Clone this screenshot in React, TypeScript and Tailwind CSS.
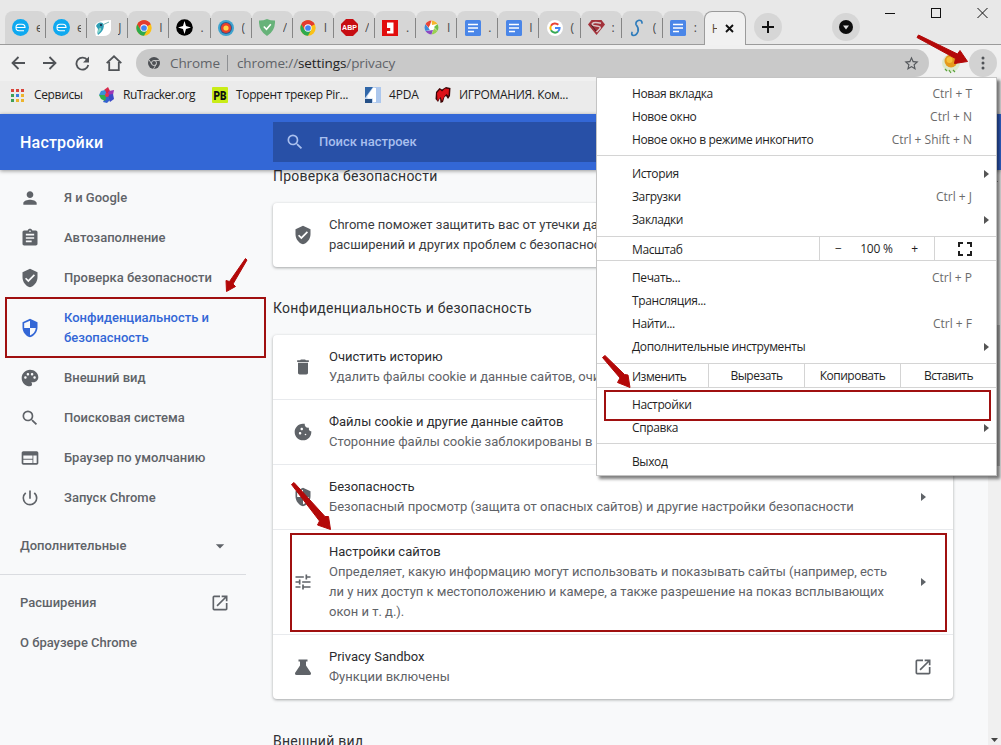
import type { ReactNode } from 'react';
import {
  MdAssignment,
  MdCookie,
  MdDelete,
  MdOpenInNew,
  MdPalette,
  MdPerson,
  MdPowerSettingsNew,
  MdSearch,
  MdSecurity,
  MdStarBorder,
  MdTune,
  MdVerifiedUser,
  MdWeb,
  MdArrowDropDown,
} from 'react-icons/md';

function ChromeLogo({ size = 16 }: { size?: number }) {
  return (
    <svg width={size} height={size} viewBox="0 0 48 48">
      <circle cx="24" cy="24" r="23" fill="#fbc116" />
      <path d="M24 24 L4.1 12.5 A23 23 0 0 1 43.9 12.5 Z" fill="#e33b2e" />
      <path d="M4.1 12.5 A23 23 0 0 0 24 47 L34 29.5 L24 24 L14 29.5 Z" fill="#2da94f" />
      <path d="M24 13 H44 A23 23 0 0 0 4.1 12.5 L14 29.5 Z" fill="#e33b2e" />
      <circle cx="24" cy="24" r="11" fill="#fff" />
      <circle cx="24" cy="24" r="8.6" fill="#4384f3" />
    </svg>
  );
}

function DocsIcon() {
  return (
    <svg width="16" height="16" viewBox="0 0 16 16">
      <rect width="16" height="16" rx="1.5" fill="#4a86e8" />
      <path d="M3 4.5h10M3 8h10M3 11.5h6" stroke="#fff" strokeWidth="1.7" />
    </svg>
  );
}

function EIcon() {
  return (
    <svg width="17" height="17" viewBox="0 0 17 17">
      <circle cx="8.5" cy="8.5" r="8.5" fill="#0fa9f0" />
      <path d="M4 8.5h9c0-2-1.5-3.2-3-3.2H7c-1.8 0-3 1.4-3 3.2s1.2 3.2 3 3.2h5" fill="none" stroke="#fff" strokeWidth="1.1" />
    </svg>
  );
}

function BirdIcon() {
  return (
    <svg width="16" height="16" viewBox="0 0 16 16">
      <path d="M0 5Q3 0 16 0v10q-1 6-8 6H1Q-1 10 0 5z" fill="#fff" />
      <path d="M1 6Q2.500 2.500 5.500 2.500q3.500 0 3.300 4Q8.500 11 3 15q-1-2 0-6z" fill="#2f9fb5" />
      <path d="M8.5 4.500 14 2" stroke="#4c9c9c" strokeWidth=".8" />
      <path d="M5 7.500q2.500 1 0 4l-2 2q-1-3 2-6z" fill="#86d5c8" />
      <circle cx="6" cy="5" r=".9" fill="#113" />
    </svg>
  );
}

function SparkIcon() {
  return (
    <svg width="17" height="17" viewBox="0 0 17 17">
      <circle cx="8.5" cy="8.5" r="8.3" fill="#000" />
      <path d="M8.5 2 10 7l5 1.5L10 10l-1.5 5L7 10 2 8.5 7 7z" fill="#fff" />
    </svg>
  );
}

function TargetIcon() {
  return (
    <svg width="16" height="16" viewBox="0 0 16 16">
      <circle cx="8" cy="8" r="8" fill="#3ea4cf" />
      <circle cx="8" cy="8" r="6" fill="#30548c" />
      <circle cx="8" cy="8" r="5" fill="#e8402a" />
      <circle cx="8" cy="8" r="2.6" fill="#ffd34a" />
    </svg>
  );
}

function GreenShield() {
  return (
    <svg width="16" height="17" viewBox="0 0 16 17">
      <path d="M8 0q4 1.7 8 1.5Q16.5 12 8 17-.5 12 0 1.5 4 1.7 8 0z" fill="#67b279" />
      <path d="m4.8 7.5 2.7 2.8 4.3-5" fill="none" stroke="#fff" strokeWidth="1.6" />
    </svg>
  );
}

function AbpIcon() {
  return (
    <svg width="17" height="17" viewBox="0 0 17 17">
      <path d="M5 0h7l5 5v7l-5 5H5l-5-5V5z" fill="#c70d12" />
      <text x="8.5" y="11.2" textAnchor="middle" fontFamily="Liberation Sans" fontSize="7" fontWeight="700" fill="#fff">ABP</text>
    </svg>
  );
}

function RedOneIcon() {
  return (
    <svg width="16" height="16" viewBox="0 0 16 16">
      <rect width="16" height="16" fill="#e20d0d" />
      <path d="M5 2.500h6.500v11H5v-2.500h3.200V8H5z" fill="#fff" />
    </svg>
  );
}

function PinwheelIcon() {
  return (
    <svg width="15" height="15" viewBox="0 0 15 15">
      <circle cx="7.5" cy="7.5" r="7" fill="#fff" />
      <path d="M7.5.5a7 7 0 0 1 6 3.5L8 5z" fill="#f5b52b" />
      <path d="M13.5 4a7 7 0 0 1 0 7L10 7z" fill="#6fbf47" />
      <path d="M13.5 11a7 7 0 0 1-6 3.5L10 8z" fill="#9ad052" />
      <path d="M7.5 14.5a7 7 0 0 1-6-3.5L9 10z" fill="#8a4bc0" />
      <path d="M1.5 11a7 7 0 0 1 0-7L6 10z" fill="#3e8ad8" />
      <path d="M1.5 4a7 7 0 0 1 6-3.5L5 8z" fill="#e84536" />
      <circle cx="7.5" cy="7.5" r="2.5" fill="#fff" />
    </svg>
  );
}

function GoogleIcon() {
  return (
    <svg width="16" height="16" viewBox="0 0 16 16">
      <circle cx="8" cy="8" r="8" fill="#fff" />
      <g fill="none" strokeWidth="2">
        <path d="M4 5.7A4.6 4.6 0 0 1 11.3 4.8" stroke="#ea4335" />
        <path d="M4 10.3A4.6 4.6 0 0 1 4 5.7" stroke="#fbbc05" />
        <path d="M11 11.5A4.6 4.6 0 0 1 4 10.3" stroke="#34a853" />
        <path d="M8 8h4.6a4.6 4.6 0 0 1-1.6 3.5" stroke="#4285f4" />
      </g>
    </svg>
  );
}

function SuperIcon() {
  return (
    <svg width="17" height="15" viewBox="0 0 17 15">
      <path d="M3.5 0h10L17 4.5 8.5 15 0 4.5z" fill="#a3313a" />
      <path d="M13 3.3Q6 1.5 4.5 3.5t4 2.5 3 3L8.500 12" fill="none" stroke="#d9c7c8" strokeWidth="1.5" />
      <path d="M3 4.5 8 11" stroke="#492024" strokeWidth="1" />
    </svg>
  );
}

function ScriptSIcon() {
  return (
    <svg width="14" height="18" viewBox="0 0 14 18">
      <path d="M12 4Q12 1 9 1.300 5.500 2.200 6 5.500 9 9 8 12.500 6.500 16.500 3.500 16.500 1 16 2 13.500" fill="none" stroke="#2f7cbb" strokeWidth="1.700" strokeLinecap="round" />
    </svg>
  );
}

const tabs: { icon: ReactNode; title: string }[] = [
  { icon: <EIcon />, title: 'e' },
  { icon: <EIcon />, title: 'e' },
  { icon: <BirdIcon />, title: 'J' },
  { icon: <ChromeLogo />, title: 'I' },
  { icon: <SparkIcon />, title: '.' },
  { icon: <TargetIcon />, title: '(' },
  { icon: <GreenShield />, title: '/' },
  { icon: <ChromeLogo />, title: 'I' },
  { icon: <AbpIcon />, title: '/' },
  { icon: <RedOneIcon />, title: '.' },
  { icon: <PinwheelIcon />, title: 'I' },
  { icon: <DocsIcon />, title: '.' },
  { icon: <DocsIcon />, title: 'I' },
  { icon: <GoogleIcon />, title: '(' },
  { icon: <SuperIcon />, title: ':' },
  { icon: <ScriptSIcon />, title: '(' },
  { icon: <DocsIcon />, title: ':' },
];

function TabStrip() {
  return (
    <div className="relative flex h-[45px] items-end border-b border-[#9b9b9b] bg-[#e8e8e8] pl-[5px]">
      {tabs.map((tab, i) => (
        <div key={i} className="relative flex h-[33px] w-[41.12px] shrink-0 items-center rounded-t-lg bg-[#d6d6d6] pl-[7px]">
          <span className="flex w-[17px] shrink-0 justify-center">{tab.icon}</span>
          <span className="ml-[7px] w-1 overflow-hidden text-[12px] text-[#4a4a4a]">{tab.title}</span>
          {i < tabs.length - 1 && <span className="absolute top-[7px] right-0 h-5 w-px bg-[#858585]" />}
        </div>
      ))}
      {/* Active tab */}
      <div className="relative -mb-px flex h-[34px] w-[42px] shrink-0 items-center rounded-t-lg border border-b-0 border-[#9b9b9b] bg-[#f1f1f1] pl-[7px]">
        <span className="w-[5px] overflow-hidden text-[12px] text-[#5a4a3a]">Н</span>
        <svg className="ml-2" width="9" height="9" viewBox="0 0 9 9">
          <path d="M1 1l7 7M8 1L1 8" stroke="#111" strokeWidth="1.9" />
        </svg>
      </div>
      <div className="mb-[3px] ml-[8px] flex h-7 w-7 items-center justify-center rounded-full bg-[#d6d6d6]">
        <svg width="12" height="12" viewBox="0 0 12 12">
          <path d="M6 0v12M0 6h12" stroke="#111" strokeWidth="2" />
        </svg>
      </div>
      <div className="mb-[3px] ml-[50px] flex h-7 w-7 items-center justify-center rounded-full bg-[#d6d6d6]">
        <svg width="14" height="14" viewBox="0 0 14 14">
          <circle cx="7" cy="7" r="7" fill="#0d0d0d" />
          <path d="M4 5.5h6L7 9.5z" fill="#ddd" />
        </svg>
      </div>
      <div className="mb-[25px] ml-auto flex gap-[35px] pr-[13px]">
        <svg width="11" height="12" viewBox="0 0 11 12">
          <path d="M0 6.5h10" stroke="#111" />
        </svg>
        <svg width="11" height="12" viewBox="0 0 11 12">
          <rect x=".5" y="1.5" width="9" height="9" fill="none" stroke="#111" />
        </svg>
        <svg width="11" height="12" viewBox="0 0 11 12">
          <path d="M.5 1l10 10M10.5 1l-10 10" stroke="#111" />
        </svg>
      </div>
    </div>
  );
}

function Toolbar() {
  return (
    <div className="flex h-9 items-center bg-[#f0f0f0]">
      <svg className="ml-[11px] shrink-0" width="14" height="14" viewBox="0 0 14 14" fill="none" stroke="#505357" strokeWidth="1.8">
        <path d="M14 7H1.5M7.5 1 1.5 7l6 6" />
      </svg>
      <svg className="ml-[18px] shrink-0" width="14" height="14" viewBox="0 0 14 14" fill="none" stroke="#505357" strokeWidth="1.8">
        <path d="M0 7h12.5M6.5 1l6 6-6 6" />
      </svg>
      <svg className="ml-[18px] shrink-0" width="15" height="15" viewBox="0 0 15 15">
        <path d="M12.4 4.2A6 6 0 1 0 13.3 9" fill="none" stroke="#505357" strokeWidth="1.8" />
        <path d="M14 .5v6H8z" fill="#505357" />
      </svg>
      <svg className="ml-[16px] shrink-0" width="16" height="16" viewBox="0 0 16 16" fill="none" stroke="#505357" strokeWidth="1.8">
        <path d="M.7 8.2 8 1.3l7.3 6.9M3.2 7v8.1h9.6V7" />
      </svg>
      <div className="ml-[14px] flex h-7 w-[793px] shrink-0 items-center rounded-full bg-[#c9c9c9] pr-[9px] pl-3">
        <svg width="12" height="12" viewBox="0 0 12 12">
          <circle cx="6" cy="6" r="6" fill="#4d5054" />
          <circle cx="6" cy="6" r="2.5" fill="none" stroke="#c9c9c9" />
          <path d="M6 3.5h5.5M3.8 7.3 1.2 3M8.2 7.3 5.5 12" stroke="#c9c9c9" strokeWidth=".9" />
        </svg>
        <span className="ml-[10px] w-[50px] text-[13.5px] tracking-[-0.1px] whitespace-nowrap text-[#5f6368]">Chrome</span>
        <span className="ml-[7px] h-4 w-px bg-[#8e9093]" />
        <span className="ml-[9px] text-[13.5px] tracking-[-0.1px] whitespace-nowrap text-[#5f6368]">
          chrome://<span className="text-[#222]">settings</span>/privacy
        </span>
        <MdStarBorder className="ml-auto h-[17px] w-[17px] text-[#55585c]" />
      </div>
      <svg className="ml-3 shrink-0" width="20" height="22" viewBox="0 0 20 22">
        <circle cx="10" cy="11" r="9" fill="#dce8cc" />
        <path d="M4 17l2 2m2-1 2 3m2-3 2 2" stroke="#5aa33c" strokeWidth="1.2" />
        <circle cx="10" cy="9" r="6.5" fill="#e59a1d" />
        <circle cx="8.5" cy="8" r="3" fill="#f5c13a" />
      </svg>
      <div className="ml-2 flex h-7 w-7 shrink-0 items-center justify-center rounded-full bg-[#d2d2d2]">
        <svg width="4" height="14" viewBox="0 0 4 14" fill="#505357">
          <circle cx="2" cy="2" r="1.5" />
          <circle cx="2" cy="7" r="1.5" />
          <circle cx="2" cy="12" r="1.5" />
        </svg>
      </div>
    </div>
  );
}

function BookmarksBar() {
  return (
    <div className="flex h-[33px] items-center bg-[#ebebeb] pb-[5px] text-[12px] tracking-[-0.35px] whitespace-nowrap text-[#1e1e1e]">
      <svg className="ml-[11px] shrink-0" width="13" height="13" viewBox="0 0 13 13">
        <path d="M0 0h3v3H0zM5 0h3v3H5zM10 0h3v3h-3z" fill="#d9453c" />
        <path d="M0 5h3v3H0z" fill="#3f9f57" />
        <path d="M5 5h3v3H5z" fill="#3b7fe0" />
        <path d="M10 5h3v3h-3zM10 10h3v3h-3zM5 10h3v3H5z" fill="#ecb42c" />
        <path d="M0 10h3v3H0z" fill="#3f9f57" />
      </svg>
      <span className="ml-[10px] w-[49px]">Сервисы</span>
      <svg className="ml-[16px] shrink-0" width="16" height="16" viewBox="0 0 16 16">
        <path d="M8 8 5 3l4-3 2 4z" fill="#d6284b" />
        <path d="M8 8l2-4 5-1-1 5z" fill="#9b35b5" />
        <path d="M8 8l6-1 1 5-4 3z" fill="#3b49c8" />
        <path d="M8 8l3 5-3 3-4-1z" fill="#3460d0" />
        <path d="M8 8l-2 6-4-2-2-4z" fill="#2fae4c" />
        <path d="M8 8 0 8l2-4 4-1z" fill="#3e8fd8" />
        <circle cx="8" cy="8" r="2" fill="#e8324e" />
      </svg>
      <span className="ml-[8px] w-[72px] tracking-[-0.5px]">RuTracker.org</span>
      <svg className="ml-[17px] shrink-0" width="16" height="16" viewBox="0 0 16 16">
        <rect width="16" height="16" rx="1" fill="#c9ec17" />
        <text x="8" y="13" textAnchor="middle" fontFamily="Roboto" fontSize="13" fontWeight="900" letterSpacing="0" textLength="13" lengthAdjust="spacingAndGlyphs" fill="#111">PB</text>
      </svg>
      <span className="ml-[8px] w-[112px]">Торрент трекер Pir...</span>
      <svg className="ml-[17px] shrink-0" width="16" height="16" viewBox="0 0 16 16">
        <rect width="16" height="16" fill="#c3d7f2" />
        <path d="M10 0h6v16h-6z" fill="#9cbdea" opacity=".6" />
        <path d="M0 0h8L0 11z" fill="#2f66a8" />
        <path d="M8 1h3v14H8v-3.500H2.500V9z" fill="#fff" />
        <path d="M0 12h7v4H0z" fill="#244f86" />
      </svg>
      <span className="ml-[8px] w-[30px] tracking-[-0.2px]">4PDA</span>
      <svg className="ml-[16px] shrink-0" width="16" height="16" viewBox="0 0 16 16">
        <path d="M1 5 4.5 1 7 2.5 11 0l4.5 1L15 9l-2 3-2-3-1.5 1L8 15l-2.5 1L5 11l-2 4L.5 12z" fill="#3b0506" />
        <path d="M2 6 5 2.5 7 4.5 10 1.500l4 .5-.5 7-2-2-2 2-2.500 5-1.500-4-3 4z" fill="#dd1118" />
      </svg>
      <span className="ml-[8px] w-[112px]">ИГРОМАНИЯ. Ком...</span>
    </div>
  );
}

const navItems = [
  { Icon: MdPerson, label: 'Я и Google' },
  { Icon: MdAssignment, label: 'Автозаполнение' },
  { Icon: MdVerifiedUser, label: 'Проверка безопасности' },
  { Icon: MdSecurity, label: 'Конфиденциальность и безопасность', active: true },
  { Icon: MdPalette, label: 'Внешний вид' },
  { Icon: MdSearch, label: 'Поисковая система' },
  { Icon: MdWeb, label: 'Браузер по умолчанию' },
  { Icon: MdPowerSettingsNew, label: 'Запуск Chrome' },
];

function Sidebar() {
  return (
    <nav className="relative w-[273px] shrink-0 pt-2 text-[13px] leading-5 font-medium text-[#5f6368]">
      {navItems.map(({ Icon, label, active }) => (
        <div key={label} className={active ? 'flex items-center py-2.5 pl-5 text-[#3367d6]' : 'flex items-center py-2.5 pl-5'}>
          <Icon className="h-5 w-5 shrink-0" />
          <span className="ml-6 w-[165px]">{label}</span>
        </div>
      ))}
      <div className="mt-2 flex h-10 items-center pl-5">
        <span className="w-[190px]">Дополнительные</span>
        <MdArrowDropDown className="h-5 w-5" />
      </div>
      <div className="mt-2 mb-2 w-[246px] border-t border-[#dadce0]" />
      <div className="flex h-10 items-center pl-5">
        <span className="w-[190px]">Расширения</span>
        <MdOpenInNew className="h-5 w-5" />
      </div>
      <div className="flex h-10 items-center pl-5">О браузере Chrome</div>
      {/* Callout around the active item */}
      <div className="absolute top-[127px] left-[5px] h-[61px] w-[261px] border-2 border-[#a01010]" />
    </nav>
  );
}

function FlaskIcon({ className }: { className?: string }) {
  return (
    <svg className={className} viewBox="0 0 20 20" fill="currentColor">
      <path d="M5.5 2.500h9v2H13v4l5 7.500q.5 2-1.500 2h-13Q1.500 18 2 16l5-7.500v-4H5.500z" />
    </svg>
  );
}

type Row = {
  Icon: (props: { className?: string }) => ReactNode;
  title: string;
  text: string;
  end?: 'arrow' | 'link';
  marked?: boolean;
};

const rows: Row[] = [
  { Icon: MdDelete, title: 'Очистить историю', text: 'Удалить файлы cookie и данные сайтов, очис' },
  { Icon: MdCookie, title: 'Файлы cookie и другие данные сайтов', text: 'Сторонние файлы cookie заблокированы в' },
  { Icon: MdSecurity, title: 'Безопасность', text: 'Безопасный просмотр (защита от опасных сайтов) и другие настройки безопасности', end: 'arrow' },
  {
    Icon: MdTune,
    title: 'Настройки сайтов',
    text: 'Определяет, какую информацию могут использовать и показывать сайты (например, есть ли у них доступ к местоположению и камере, а также разрешение на показ всплывающих окон и т. д.).',
    end: 'arrow',
    marked: true,
  },
  { Icon: FlaskIcon, title: 'Privacy Sandbox', text: 'Функции включены', end: 'link' },
];

function Content() {
  return (
    <main className="w-[680px] shrink-0 text-[13px] leading-5 text-[#5f6368]">
      <h2 className="mt-[-4px] h-5 text-[14px] tracking-[0.25px] text-[#303134]">Проверка безопасности</h2>
      <div className="mt-[17px] flex h-16 items-center rounded bg-white pl-5 shadow-[0_1px_3px_rgba(60,64,67,0.45)]">
        <MdVerifiedUser className="h-5 w-5 shrink-0" />
        <p className="ml-4 w-[560px] text-[#3a3b3e]">
          Chrome поможет защитить вас от утечки дан
          <br />
          расширений и других проблем с безопаснос
        </p>
      </div>
      <h2 className="mt-[31px] h-5 text-[14px] tracking-[0.25px] text-[#303134]">Конфиденциальность и безопасность</h2>
      <div className="mt-[17px] rounded bg-white shadow-[0_1px_3px_rgba(60,64,67,0.45)]">
        {rows.map(({ Icon, title, text, end, marked }, i) => (
          <div key={title} className={i > 0 ? 'relative flex items-center border-t border-[#e8eaed] py-3 pl-5' : 'relative flex items-center py-3 pl-5'}>
            <Icon className="h-5 w-5 shrink-0" />
            <div className="ml-4 w-[564px]">
              <div className="text-[#2b2c2f]">{title}</div>
              <div>{text}</div>
            </div>
            <span className="ml-5 flex w-5 justify-center">
              {end === 'link' && <MdOpenInNew className="h-5 w-5" />}
              {end === 'arrow' && (
                <svg width="5" height="8" viewBox="0 0 5 8">
                  <path d="M0 0l5 4-5 4z" fill="#5f6368" />
                </svg>
              )}
            </span>
            {marked && <div className="absolute top-[3px] left-[17px] h-[99px] w-[657px] border-2 border-[#a01010]" />}
          </div>
        ))}
      </div>
      <h2 className="mt-[32px] h-5 text-[14px] tracking-[0.25px] text-[#303134]">Внешний вид</h2>
    </main>
  );
}

function MenuItem({ label, keys, sub }: { label: string; keys?: string; sub?: boolean }) {
  return (
    <div className="flex h-[23px] items-center justify-between pr-6 pb-[2px] pl-[35px]">
      <span className="tracking-[-0.38px]">{label}</span>
      {keys && <span className="text-[#6b6b6b]">{keys}</span>}
      {sub && (
        <svg className="-mr-[17px]" width="5" height="8" viewBox="0 0 5 8">
          <path d="M0 0l5 4-5 4z" fill="#555" />
        </svg>
      )}
    </div>
  );
}

function AppMenu() {
  return (
    <div className="absolute top-[77px] left-[596px] h-[399px] w-[401px] border border-[#c4c4c4] bg-white text-[12px] whitespace-nowrap text-[#1f1f1f] shadow-[3px_3px_3px_rgba(0,0,0,0.5)]">
      <div className="pt-[5px] pb-[3px]">
        <MenuItem label="Новая вкладка" keys="Ctrl + T" />
        <MenuItem label="Новое окно" keys="Ctrl + N" />
        <MenuItem label="Новое окно в режиме инкогнито" keys="Ctrl + Shift + N" />
      </div>
      <div className="border-t border-[#d4d4d4] pt-[7px] pb-1">
        <MenuItem label="История" sub />
        <MenuItem label="Загрузки" keys="Ctrl + J" />
        <MenuItem label="Закладки" sub />
      </div>
      <div className="flex h-[25px] border-y border-[#d4d4d4] leading-[23px]">
        <span className="w-[222px] pt-px pl-[35px] tracking-[-0.4px]">Масштаб</span>
        <div className="flex w-[116px] items-center justify-between border-x border-[#d4d4d4] pr-4 pl-[15px]">
          <span>−</span>
          <span className="tracking-[-0.2px]">100 %</span>
          <span>+</span>
        </div>
        <div className="flex flex-1 items-center justify-center pr-[2px]">
          <svg width="14" height="14" viewBox="0 0 14 14" fill="none" stroke="#1f1f1f" strokeWidth="2">
            <path d="M1 5V1h4M9 1h4v4M13 9v4H9M5 13H1V9" />
          </svg>
        </div>
      </div>
      <div className="pt-1.5 pb-1">
        <MenuItem label="Печать..." keys="Ctrl + P" />
        <MenuItem label="Трансляция..." />
        <MenuItem label="Найти..." keys="Ctrl + F" />
        <MenuItem label="Дополнительные инструменты" sub />
      </div>
      <div className="flex h-[25px] border-y border-[#d4d4d4] leading-[23px] tracking-[-0.5px]">
        <span className="w-[111px] pt-px pl-[35px]">Изменить</span>
        <span className="w-24 border-l border-[#d4d4d4] text-center">Вырезать</span>
        <span className="w-24 border-l border-[#d4d4d4] text-center">Копировать</span>
        <span className="w-24 border-l border-[#d4d4d4] text-center">Вставить</span>
      </div>
      <div className="relative pt-1.5 pb-[3px]">
        <MenuItem label="Настройки" />
        <MenuItem label="Справка" sub />
        <div className="absolute top-[2px] left-[7px] h-[31px] w-[387px] border-2 border-[#a01010]" />
      </div>
      <div className="border-t border-[#d4d4d4] pt-[7px]">
        <MenuItem label="Выход" />
      </div>
    </div>
  );
}

// Hand-drawn red pointers lying over the window
function Pointers() {
  return (
    <svg className="pointer-events-none absolute top-0 left-0" width="1001" height="745" viewBox="0 0 1001 745" fill="#b30808" stroke="#b30808" strokeWidth="1" strokeLinejoin="round">
      <path d="M245.5 258.5 229.5 281.5 226 280.5 226.5 291.5 235.5 286.500 233 284 247 260z" />
      <path d="M917 37.5 955.5 58.5 954.5 63.5 967.5 61.5 960 50.5 957.5 54 918.5 35z" />
      <path d="M602.5 357.5 620 378 617.5 382.5 630 387.5 628 375 624.5 374.5 605 355.5z" />
      <path d="M291.5 484.5 319.5 521 317.5 525 330.5 529.5 328.5 516.5 325 516.5 294 482.5z" />
    </svg>
  );
}

export default function App() {
  return (
    <div className="relative flex h-[745px] w-[1001px] flex-col overflow-hidden bg-[#f8f9fa] font-['Open_Sans',sans-serif]">
      <TabStrip />
      <Toolbar />
      <BookmarksBar />
      <header className="relative z-10 flex h-14 shrink-0 items-center bg-[#3367d6] font-[Roboto,sans-serif] shadow-[0_1px_4px_rgba(0,0,0,0.4)]">
        <h1 className="w-[273px] pt-0.5 pl-5 text-[16px] font-medium tracking-[0.2px] text-white">Настройки</h1>
        <div className="flex h-10 w-[680px] items-center bg-[#2850a7] pl-3 text-[13px] font-medium text-[#a9bfee]">
          <MdSearch className="h-5 w-5" />
          <span className="ml-3.5">Поиск настроек</span>
        </div>
      </header>
      <div className="flex min-h-0 flex-1 overflow-hidden font-[Roboto,sans-serif]">
        <Sidebar />
        <Content />
        <div className="ml-auto flex w-[13px] flex-col items-center justify-between bg-[#f0f0f0] pt-2 pb-[3px]">
          <svg width="7" height="4" viewBox="0 0 7 4">
            <path d="M0 4l3.5-4L7 4z" fill="#444" />
          </svg>
          <div className="mt-[143px] mb-auto h-[141px] w-[11px] shrink-0 bg-[#c1c1c1]" />
          <svg width="7" height="4" viewBox="0 0 7 4">
            <path d="M0 0h7L3.5 4z" fill="#444" />
          </svg>
        </div>
      </div>
      <div className="absolute z-20">
        <AppMenu />
        <Pointers />
      </div>
    </div>
  );
}
